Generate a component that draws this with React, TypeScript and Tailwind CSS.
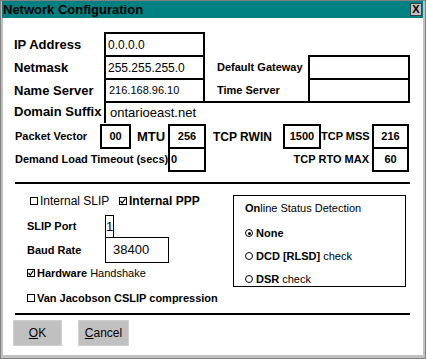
import React from "react";

function Check({ checked = false }: { checked?: boolean }) {
  return (
    <span className="w-[8px] h-[8px] border border-black bg-white flex items-center justify-center shrink-0">
      {checked && (
        <svg width="6" height="6" viewBox="0 0 6 6">
          <path d="M0.5 3 L2.2 5 L5.5 0.5" fill="none" stroke="black" strokeWidth="1.2" />
        </svg>
      )}
    </span>
  );
}

function Radio({ selected = false }: { selected?: boolean }) {
  return (
    <span className="w-[8px] h-[8px] rounded-full border border-black bg-white flex items-center justify-center shrink-0">
      {selected && <span className="w-[3px] h-[3px] rounded-full bg-black" />}
    </span>
  );
}

export default function App() {
  return (
    <div className="w-[426px] h-[359px] bg-[#c0c0c0] border border-[#808080] flex flex-col font-['Liberation_Sans',Arial,sans-serif] text-black">
      {/* Title bar */}
      <div className="h-[17px] shrink-0 ml-[1px] mr-[2px] bg-[#008080] flex items-center justify-between pl-[1px] pr-[1px]">
        <span className="text-[13px] font-bold leading-none">Network Configuration</span>
        <span className="w-[12px] h-[13px] bg-[#c0c0c0] border border-[#404040] flex items-center justify-center text-[11px] font-bold leading-none">
          X
        </span>
      </div>

      {/* Body */}
      <div className="flex-1 bg-white ml-[2px] mr-[2px] mb-[3px] pt-[14px] pl-[11px] flex flex-col">
        <div className="flex items-center h-[25px]">
          <span className="w-[90px] text-[13px] font-bold">IP Address</span>
          <div className="w-[101px] h-[25px] border-2 border-black flex items-center pl-[2px] text-[12px]">0.0.0.0</div>
        </div>
        <div className="flex items-center h-[25px] -mt-[2px]">
          <span className="w-[90px] text-[13px] font-bold">Netmask</span>
          <div className="w-[101px] h-[25px] border-2 border-black flex items-center pl-[2px] text-[12px]">255.255.255.0</div>
          <span className="ml-[12px] w-[91px] text-[11px] font-bold">Default Gateway</span>
          <div className="w-[102px] h-[25px] border-2 border-black" />
        </div>
        <div className="flex items-center h-[25px] -mt-[2px]">
          <span className="w-[90px] text-[13px] font-bold">Name Server</span>
          <div className="w-[101px] h-[25px] border-2 border-black flex items-center pl-[3px] text-[11px]">216.168.96.10</div>
          <span className="ml-[12px] w-[91px] text-[11px] font-bold">Time Server</span>
          <div className="w-[102px] h-[25px] border-2 border-black" />
        </div>
        <div className="flex items-center h-[22px] -mt-[2px]">
          <span className="w-[90px] text-[13px] font-bold whitespace-nowrap">Domain Suffix</span>
          <div className="w-[204px] h-[22px] border-t-2 border-l-2 border-black flex items-center pl-[4px] text-[13px]">ontarioeast.net</div>
        </div>

        {/* Packet row */}
        <div className="flex items-center h-[25px] mt-[1px] ml-[1px]">
          <span className="w-[85px] text-[11px] font-bold">Packet Vector</span>
          <div className="w-[31px] h-[25px] border-2 border-black flex items-center justify-center text-[11px] font-bold">00</div>
          <span className="w-[37px] pl-[6px] text-[13px] font-bold">MTU</span>
          <div className="w-[38px] h-[25px] border-2 border-black flex items-center justify-center text-[11px] font-bold">256</div>
          <span className="w-[77px] pl-[7px] text-[12px] font-bold">TCP RWIN</span>
          <div className="w-[38px] h-[25px] border-2 border-black flex items-center justify-center text-[11px] font-bold">1500</div>
          <span className="w-[51px] text-[11px] font-bold whitespace-nowrap">TCP MSS</span>
          <div className="w-[37px] h-[25px] border-2 border-black flex items-center justify-center text-[11px] font-bold">216</div>
        </div>
        <div className="flex items-center h-[25px] -mt-[2px] ml-[1px]">
          <span className="w-[153px] text-[11px] font-bold whitespace-nowrap">Demand Load Timeout (secs)</span>
          <div className="w-[38px] h-[25px] border-2 border-black flex items-center pl-[1px] text-[11px] font-bold">0</div>
          <span className="w-[166px] pr-[3px] text-right text-[11px] font-bold whitespace-nowrap">TCP RTO MAX</span>
          <div className="w-[37px] h-[25px] border-2 border-black flex items-center justify-center text-[11px] font-bold">60</div>
        </div>

        <div className="mt-[10px] ml-[1px] w-[395px] h-[2px] bg-black" />

        {/* Lower section */}
        <div className="flex h-[129px] ml-[13px]">
          <div className="w-[206px] flex flex-col whitespace-nowrap">
            <div className="flex items-center h-[14px] mt-[10px] ml-[3px] text-[12px]">
              <Check />
              <span className="ml-[2px] w-[79px]">Internal SLIP</span>
              <Check checked />
              <span className="ml-[2px] font-bold">Internal PPP</span>
            </div>
            <div className="flex items-center h-[23px] mt-[7px]">
              <span className="w-[78px] text-[11px] font-bold">SLIP Port</span>
              <div className="w-[9px] h-[23px] border border-black flex items-center justify-center text-[13px]">1</div>
            </div>
            <div className="flex items-center h-[26px] -mt-[1px]">
              <span className="w-[78px] text-[11px] font-bold">Baud Rate</span>
              <div className="w-[64px] h-[26px] border border-black flex items-center pl-[7px] text-[13px]">38400</div>
            </div>
            <div className="flex items-center h-[14px] mt-[3px] text-[11px]">
              <Check checked />
              <span className="ml-[2px] font-bold">Hardware</span>
              <span className="ml-[3px]">Handshake</span>
            </div>
            <div className="flex items-center h-[14px] mt-[11px] text-[11px]">
              <Check />
              <span className="ml-[2px] font-bold">Van Jacobson CSLIP compression</span>
            </div>
          </div>

          <div className="mt-[11px] w-[173px] h-[92px] border border-black pl-[11px] flex flex-col text-[11px] whitespace-nowrap">
            <div className="h-[14px] mt-[5px] flex items-center">
              <span className="font-bold">On</span>
              <span>line Status Detection</span>
            </div>
            <div className="h-[14px] mt-[11px] flex items-center">
              <Radio selected />
              <span className="ml-[3px] font-bold">None</span>
            </div>
            <div className="h-[14px] mt-[9px] flex items-center">
              <Radio />
              <span className="ml-[3px] font-bold">DCD [RLSD]</span>
              <span className="ml-[3px]">check</span>
            </div>
            <div className="h-[14px] mt-[9px] flex items-center">
              <Radio />
              <span className="ml-[3px] font-bold">DSR</span>
              <span className="ml-[3px]">check</span>
            </div>
          </div>
        </div>

        <div className="ml-[1px] w-[395px] h-[2px] bg-black" />

        {/* Buttons */}
        <div className="flex mt-[5px] -ml-[1px] text-[12px]">
          <button className="w-[49px] h-[26px] bg-[#c0c0c0] border border-[#d0d0d0] flex items-center justify-center">
            <span className="underline">O</span>K
          </button>
          <button className="ml-[16px] w-[51px] h-[26px] bg-[#c0c0c0] border border-[#d0d0d0] flex items-center justify-center">
            <span className="underline">C</span>ancel
          </button>
        </div>
      </div>
    </div>
  );
}
